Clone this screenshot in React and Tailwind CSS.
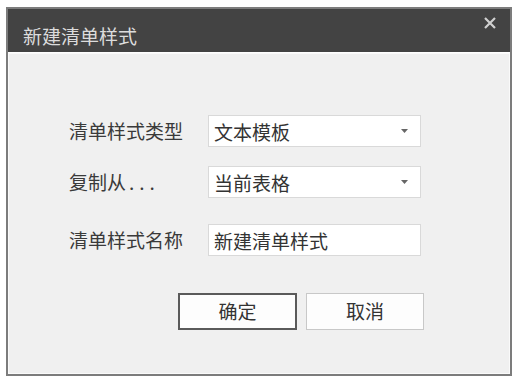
import React from 'react';

const font = { fontFamily: '"Noto Sans CJK SC", "Noto Sans", sans-serif' };

function Arrow() {
  return (
    <svg width="7" height="4" viewBox="0 0 7 4" className="mr-[12px]">
      <path d="M0 0 L7 0 L3.5 4 Z" fill="#666" />
    </svg>
  );
}

function Field({ label, value, select, className }) {
  return (
    <div className={`flex items-center ${className}`}>
      <div className="w-[139px] text-[19px] text-[#3a3a3a]">{label}</div>
      <div className="w-[213px] h-[32px] bg-white border border-[#d9d9d9] flex items-center justify-between pl-[5px]">
        <span className="text-[19px] text-[#333] leading-none">{value}</span>
        {select && <Arrow />}
      </div>
    </div>
  );
}

export default function App() {
  return (
    <div className="w-[531px] h-[382px] bg-white pl-[6px] pt-[7px]" style={font}>
      <div className="w-[506px] h-[369px] border-2 border-[#7c7c7c] bg-[#f0f0f0] flex flex-col">
        {/* Title bar */}
        <div className="h-[44px] bg-[#434343] border-b border-white flex items-center justify-between pl-[15px] pr-[14px]">
          <span className="text-[19px] text-[#dcdcdc] pt-[10px] leading-none">新建清单样式</span>
          <svg width="12" height="12" viewBox="0 0 12 12" className="mb-[16px]">
            <path d="M1 1 L11 11 M11 1 L1 11" stroke="#d0d0d0" strokeWidth="2.2" />
          </svg>
        </div>

        {/* Form */}
        <div className="flex-1 border border-[#fafafa] pl-[60px] pt-[61px]">
          <Field label="清单样式类型" value="文本模板" select />
          <Field
            label={<>复制从<span className="tracking-[5px] ml-[3px]">...</span></>}
            value="当前表格"
            select
            className="mt-[19px]"
          />
          <Field label="清单样式名称" value="新建清单样式" className="mt-[26px]" />

          <div className="flex gap-[9px] ml-[109px] mt-[37px]">
            <button className="w-[119px] h-[37px] bg-[#fdfdfd] border-2 border-[#5a5a5a] text-[19px] text-[#333]">
              确定
            </button>
            <button className="w-[118px] h-[37px] bg-[#fdfdfd] border border-[#c8c8c8] text-[19px] text-[#333]">
              取消
            </button>
          </div>
        </div>
      </div>
    </div>
  );
}
